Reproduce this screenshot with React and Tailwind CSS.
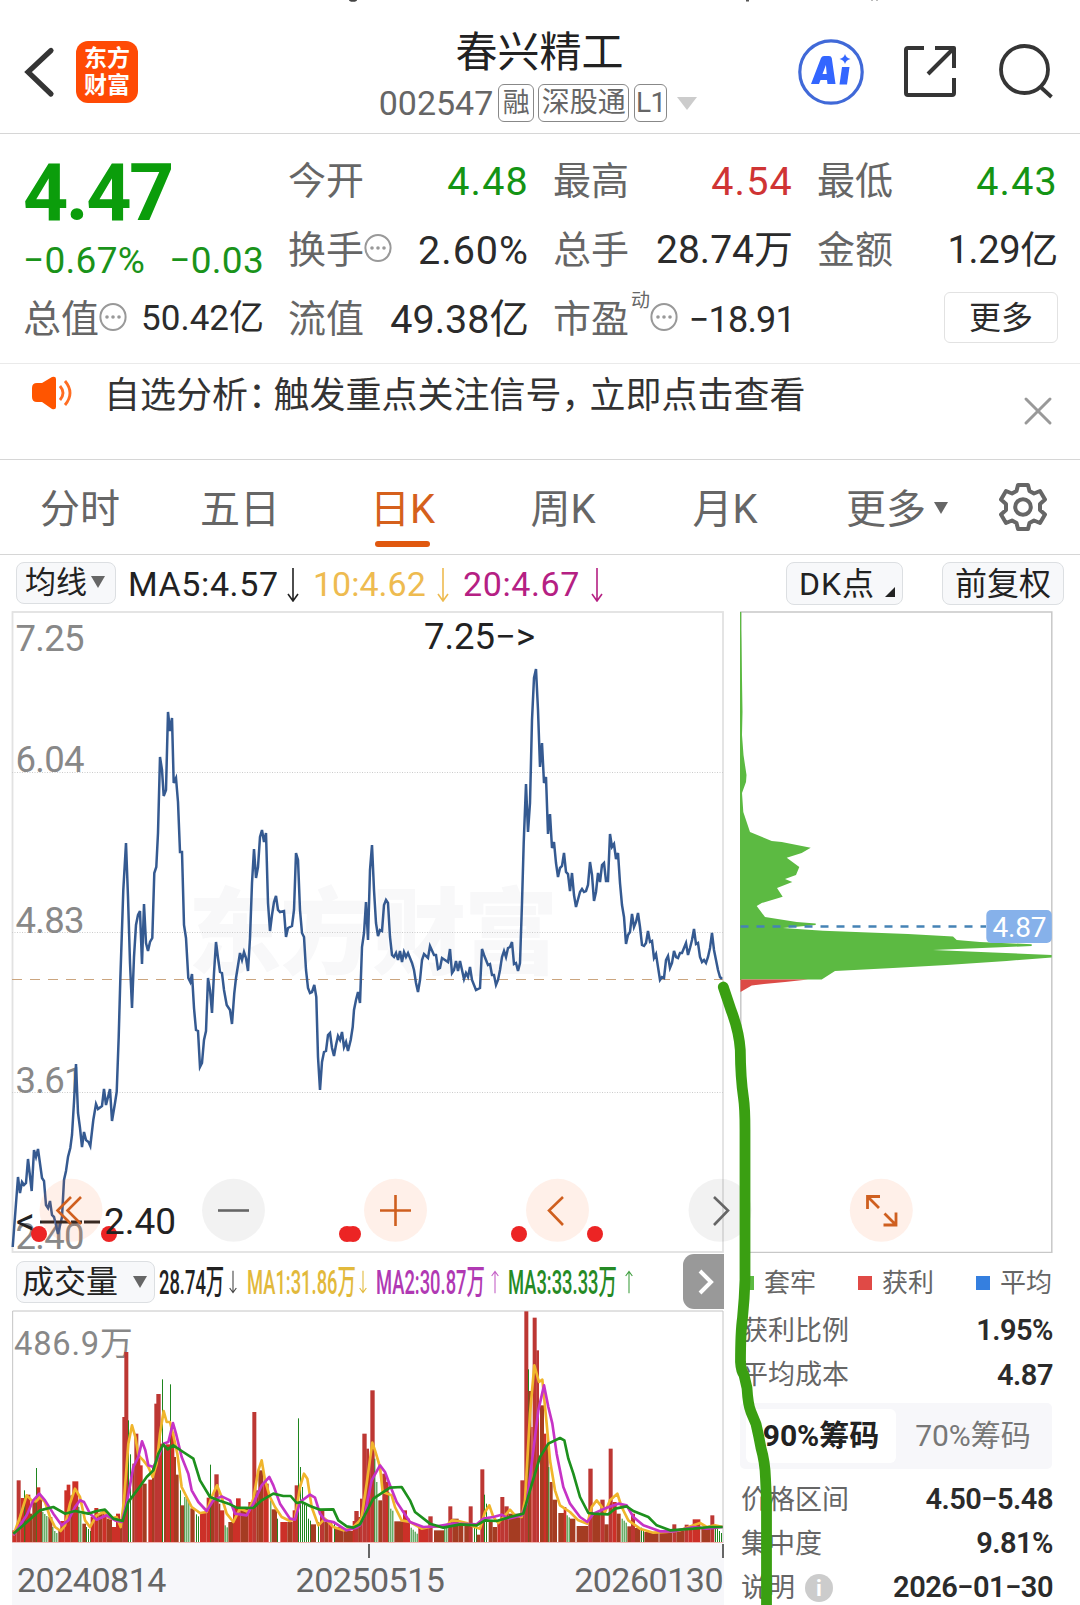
import { X } from 'lucide-react';

const PRICE_POINTS =
  '12.7,1247 18,1177 20,1193 22,1182 24,1185 26,1183 28,1159 31.7,1191 34,1150 36,1157 38,1149 42,1178 44,1181 46,1205 48,1208 50,1201 52,1215 54,1217 56,1225 58,1234 62,1217 64,1180 66,1171 68,1157 70.3,1148 72,1135 74,1102 76,1064 78,1113 80,1128 82,1147 84,1132 86,1140 88.5,1142 90.3,1146 93.3,1120 96,1104 98,1109 102,1106 104,1089 106,1105 110,1089 112,1121 115,1103 116.7,1092 118.7,1037 120.3,980 ' +
  '123.3,890 126,843 128,897 130,963 132,1008 134,957 136,925 138,915 140,911 142,964 144,904 146,943 148,951 150,942 152.3,938 154.3,873 156.3,867 158,833 160,757 162,770 163.7,796 166,790 168,712 170,731 172,718 173.7,783 176,778 178,802 180,852 182,852 184,925 186,938 188.3,978 190.3,982 192,974 194,1008 196,1030 198,1031 200,1067 202,1063 204,1040 206,1031 208,978 210,990 212,1013 214,973 216,942 218,958 220,972 222,973 224,990 226.7,1005 230,1010 232,1024 234.3,993 236,978 240,953 242,960 244,952 246,958 248,971 250,938 252,883 254,849 256,878 258,867 260,837 262,830 264,842 266,833 268,903 270,931 272,915 274,902 276,896 278,910 280,912 284,911 286,937 288,928 292,926 294,910 296,853 298,860 300,910 302,933 304,937 306,970 308,988 310,993 312,992 314.3,985 316.3,997 318,1057 320,1090 322,1062 324,1052 326,1051 328,1035 330,1033 332,1048 334,1056 336,1045 338,1036 340,1040 342,1032 344,1047 346,1042 348,1051 350.7,1040 352.7,1027 354,1010 356,1000 358,992 360,1003 362,947 ' +
  '364,933 366,902 368,940 370,870 372,845 374,890 376,923 378,936 380,930 382,931 384,905 386,900 388,903 390,937 392,955 394,957 396,953 398,960 400,951 402,962 404,952 406,957 408,953 412,963 414,970 416,983 418,992 420,980 422,960 424,954 428,958 430,946 434,955 436,955 438,969 440,968 442,958 448,962 450,949 452,973 454,970 456,961 458,971 460,961 464,979 466,973 468,977 470,967 472,980 476,990 480,988 482,949 484,955 488,965 490,964 492,975 494,975 496,985 498,980 500,970 502,957 504,951 506,957 508,948 510,947 512,942 514,964 516,963 518,971 520,963 522,903 523.7,843 526,784 528,832 530,803 532,720 534,678 536,669 538,710 540,767 542,743 544,783 546,777 548,834 550,814 552,848 554,842 556,863 558,877 560,868 562,866 564,853 566,872 568,874 570,891 572,873 574,895 576,907 580,892 582,889 584,892 586,891 588,885 590,862 592,875 594,901 596,892 598,873 600,882 602,865 604,863 606,881 608,881 610,834 612,847 614,844 616,859 618,853 620,883 622,905 624,917 626,944 628,935 630,932 632,914 634,927 636,922 638,913 640,927 642,945 644,946 646,943 648,931 650,942 652,941 654,958 656,954 658,967 660,980 662,977 664,978 666,960 668,956 670,968 672,963 674,951 676,957 678,958 680,953 682,953 684,948 686,943 688,955 690,948 692,940 694,929 696,944 698,943 700,957 702,962 704,960 706,963 708,957 710,948 712,933 714,950 716,960 718,970 720,977 722,979';

const CHIP_POINTS =
  '740.5,612 741.3,640 742,680 742.5,712 742,735 743.5,755 746.5,775 746,782 742,793 743.3,812 750,832 771.7,841 781.7,842 810.7,847.7 801.7,853 786.7,857.7 799.3,867 796,875 785,879 792.3,882 777,888 782.7,896.7 761.7,903 756.7,906 765,917 796.7,922 815.7,923.5 815.7,925 783,928 823,930.7 908,934 953,936.5 956.7,940 980,942 1031.7,944.3 1031.7,946 1006.7,947 933,950 993,952.5 1051.7,955 1051.7,957.5 1006.7,961 946.7,965 893,968 835,971 821.7,979.5 740.5,979.5';

// volume data is in thirds of a pixel: [x0, x1, top, kind]
// r = up, d = up (isolated spike), b = mixed, g = thin down bars
const VOLUME = [
  [37, 50, 690, 'r'], [50, 62, 540, 'd'], [62, 74, 593, 'r'], [72, 75, 570, 'g'], [74, 80, 605, 'b'], [78, 91, 583, 'r'],
  [90, 97, 640, 'b'], [97, 108, 600, 'b'], [108, 111, 503, 'g'], [110, 121, 561, 'r'], [120, 126, 597, 'b'], [127, 145, 635, 'g'],
  [145, 157, 650, 'b'], [157, 160, 680, 'g'], [163, 175, 692, 'g'], [175, 185, 690, 'b'], [181, 193, 662, 'r'], [193, 201, 570, 'r'],
  [200, 211, 553, 'r'], [211, 219, 585, 'b'], [217, 235, 543, 'r'], [235, 239, 620, 'g'], [241, 246, 640, 'g'], [247, 258, 670, 'b'],
  [258, 272, 680, 'g'], [272, 283, 650, 'r'], [283, 295, 623, 'r'], [295, 307, 640, 'b'], [307, 320, 632, 'r'], [320, 336, 655, 'b'],
  [336, 348, 680, 'r'], [348, 360, 640, 'r'], [360, 368, 665, 'b'], [367, 376, 350, 'd'], [373, 385, 155, 'd'], [384, 387, 360, 'g'],
  [390, 393, 462, 'g'], [397, 404, 490, 'b'], [403, 415, 400, 'd'], [412, 421, 465, 'r'], [420, 428, 495, 'r'], [428, 440, 550, 'b'],
  [445, 458, 538, 'r'], [456, 464, 500, 'b'], [463, 471, 310, 'd'], [469, 482, 281, 'd'], [480, 487, 430, 'r'], [486, 489, 237, 'g'],
  [492, 499, 440, 'b'], [498, 511, 432, 'r'], [510, 513, 252, 'g'], [512, 523, 395, 'r'], [522, 528, 470, 'b'], [527, 536, 523, 'b'],
  [540, 543, 570, 'g'], [541, 553, 615, 'b'], [553, 568, 590, 'g'], [571, 584, 624, 'b'], [588, 598, 642, 'g'], [600, 620, 638, 'r'],
  [620, 631, 592, 'r'], [630, 633, 493, 'g'], [632, 644, 600, 'b'], [643, 656, 522, 'd'], [656, 661, 610, 'b'], [660, 673, 630, 'r'],
  [674, 684, 675, 'g'], [685, 700, 665, 'b'], [699, 709, 620, 'r'], [708, 722, 594, 'r'], [722, 745, 622, 'b'], [745, 758, 605, 'r'],
  [757, 769, 335, 'd'], [769, 776, 570, 'b'], [775, 790, 510, 'b'], [790, 806, 550, 'r'], [811, 814, 600, 'g'], [815, 831, 627, 'b'],
  [831, 836, 655, 'g'], [841, 862, 665, 'r'], [862, 878, 665, 'b'], [878, 886, 630, 'r'], [884, 894, 555, 'd'], [894, 897, 354, 'g'],
  [900, 903, 500, 'g'], [906, 909, 560, 'g'], [912, 921, 610, 'g'], [924, 933, 655, 'g'], [932, 948, 672, 'b'], [954, 957, 665, 'g'],
  [960, 973, 632, 'd'], [973, 985, 665, 'b'], [985, 997, 668, 'r'], [1002, 1005, 670, 'g'], [1005, 1030, 680, 'b'], [1030, 1060, 692, 'b'],
  [1058, 1066, 662, 'r'], [1063, 1076, 632, 'd'], [1075, 1082, 650, 'b'], [1080, 1087, 595, 'd'], [1087, 1100, 400, 'd'], [1099, 1107, 445, 'd'],
  [1106, 1112, 470, 'r'], [1111, 1124, 270, 'd'], [1123, 1127, 475, 'g'], [1129, 1132, 545, 'g'], [1135, 1147, 600, 'b'], [1147, 1159, 520, 'd'],
  [1158, 1166, 545, 'r'], [1165, 1168, 575, 'g'], [1171, 1180, 625, 'g'], [1183, 1210, 663, 'b'], [1209, 1221, 630, 'r'], [1221, 1230, 655, 'r'],
  [1232, 1253, 682, 'g'], [1255, 1286, 680, 'r'], [1285, 1298, 648, 'd'], [1302, 1333, 690, 'b'], [1333, 1346, 672, 'g'], [1345, 1357, 618, 'd'],
  [1357, 1376, 655, 'b'], [1376, 1390, 670, 'b'], [1393, 1407, 670, 'b'], [1406, 1418, 618, 'd'], [1422, 1430, 670, 'g'], [1430, 1441, 703, 'b'],
  [1441, 1453, 507, 'd'], [1452, 1455, 583, 'g'], [1458, 1464, 610, 'g'], [1466, 1478, 665, 'b'], [1478, 1491, 680, 'b'], [1492, 1502, 660, 'r'],
  [1501, 1513, 590, 'd'], [1513, 1526, 618, 'd'], [1526, 1561, 640, 'b'], [1561, 1574, 540, 'd'], [1573, 1585, 33, 'd'], [1584, 1587, 207, 'g'],
  [1585, 1594, 272, 'b'], [1594, 1598, 380, 'r'], [1598, 1610, 52, 'd'], [1609, 1617, 150, 'd'], [1620, 1632, 315, 'b'], [1631, 1639, 400, 'r'],
  [1638, 1646, 440, 'b'], [1645, 1649, 500, 'g'], [1649, 1658, 545, 'b'], [1657, 1671, 598, 'b'], [1675, 1692, 638, 'b'], [1691, 1699, 620, 'r'],
  [1700, 1710, 645, 'g'], [1710, 1726, 655, 'b'], [1730, 1765, 677, 'b'], [1765, 1778, 505, 'd'], [1777, 1801, 640, 'b'], [1801, 1814, 598, 'd'],
  [1813, 1826, 672, 'b'], [1826, 1838, 445, 'd'], [1838, 1850, 605, 'r'], [1850, 1862, 640, 'b'], [1865, 1880, 655, 'g'], [1882, 1905, 678, 'b'],
  [1893, 1905, 640, 'd'], [1905, 1921, 683, 'b'], [1923, 1932, 682, 'g'], [1933, 1976, 695, 'b'], [1978, 2016, 698, 'b'], [2017, 2029, 672, 'd'],
  [2029, 2054, 690, 'b'], [2054, 2066, 673, 'd'], [2066, 2078, 685, 'r'], [2078, 2101, 657, 'r'], [2104, 2131, 685, 'b'], [2131, 2143, 645, 'd'],
  [2145, 2169, 680, 'g'],
];

const MA_LINES = [
  {
    color: '#f0b52c',
    points:
      '40,705 60,650 80,585 95,600 108,603 120,590 135,605 150,650 165,680 182,692 195,675 210,610 225,565 240,590 255,660 270,680 290,645 310,635 330,655 350,650 362,680 372,600 385,430 396,375 406,410 415,465 430,480 445,500 458,530 470,490 480,400 491,332 500,365 510,365 520,405 532,460 545,560 560,590 575,620 600,638 620,635 635,590 651,555 665,590 680,640 700,665 720,625 745,635 760,595 775,510 785,480 795,540 810,590 825,620 845,650 870,662 885,655 900,560 912,520 922,535 935,620 955,675 975,655 1000,680 1030,690 1055,685 1080,660 1085,650 1100,550 1117,427 1125,450 1140,500 1148,575 1175,585 1185,620 1205,660 1230,665 1265,685 1295,678 1335,680 1355,660 1375,662 1400,668 1425,680 1440,685 1455,635 1468,615 1480,650 1495,668 1515,645 1530,628 1545,645 1565,650 1575,600 1590,340 1603,195 1617,245 1627,238 1640,370 1650,480 1665,570 1680,615 1710,635 1735,660 1762,670 1775,620 1790,600 1802,615 1815,635 1830,600 1852,580 1865,620 1885,660 1920,685 1960,697 2000,695 2040,690 2080,675 2100,668 2120,680 2145,675 2168,680',
  },
  {
    color: '#c633c6',
    points:
      '40,705 80,645 100,600 118,580 135,600 160,640 185,675 205,660 225,620 240,600 252,605 270,640 290,658 320,645 345,660 365,665 380,610 400,500 415,470 426,423 436,450 445,495 460,500 475,470 490,430 505,425 519,368 528,400 545,470 565,520 575,570 595,605 620,632 640,600 665,588 690,600 705,640 740,645 760,610 785,555 808,530 820,555 840,610 870,655 885,658 900,605 930,583 945,592 960,640 975,660 1000,665 1040,690 1070,682 1080,675 1095,640 1115,540 1140,495 1155,515 1170,555 1190,605 1210,635 1230,665 1270,680 1310,678 1360,670 1430,672 1450,655 1480,650 1505,643 1525,655 1565,645 1580,610 1600,450 1615,330 1632,255 1645,320 1657,370 1670,460 1690,560 1710,610 1740,650 1762,665 1780,640 1820,622 1855,610 1880,615 1900,650 1930,675 1980,693 2020,693 2080,680 2120,685 2168,680',
  },
  {
    color: '#1d901d',
    points:
      '40,700 70,675 120,630 160,620 195,640 225,632 265,640 290,632 315,628 340,655 368,662 385,605 415,565 440,530 460,510 475,460 490,432 503,447 520,435 545,452 580,475 600,540 630,590 655,600 690,612 710,622 760,623 785,600 820,580 850,587 872,587 890,608 905,605 930,617 960,628 1000,627 1015,660 1040,678 1060,682 1080,672 1120,595 1170,562 1205,560 1230,600 1245,635 1290,670 1330,682 1380,672 1430,675 1455,660 1490,662 1530,650 1570,640 1590,570 1620,470 1645,430 1680,413 1693,420 1705,475 1720,520 1740,590 1765,638 1780,640 1825,642 1845,625 1880,618 1900,632 1945,650 1970,675 2010,690 2080,685 2130,680 2168,680',
  },
];

const BAR_COLORS = { r: '#cc3028', d: '#bd3733', b: '#a53c22', g: '#1f861f' };

function Caret({ className }) {
  return (
    <svg viewBox="0 0 20 16" className={className} preserveAspectRatio="none">
      <path d="M0 0h20L10 16z" fill="currentColor" />
    </svg>
  );
}

function Dots() {
  return (
    <svg viewBox="0 0 28 30" className="mb-[6px] h-[30px] w-[28px] shrink-0 text-[#999]">
      <ellipse cx="14" cy="15" rx="12.600" ry="13" fill="none" stroke="currentColor" strokeWidth="2" />
      <circle cx="8" cy="15" r="1.8" fill="currentColor" />
      <circle cx="14" cy="15" r="1.8" fill="currentColor" />
      <circle cx="20" cy="15" r="1.8" fill="currentColor" />
    </svg>
  );
}

function Header() {
  return (
    <header className="relative flex h-[134px] shrink-0 items-center border-b border-[#d6d6d6] pt-[11px]">
      <svg viewBox="0 0 1080 3" className="absolute top-0 left-0 h-[3px] w-[1080px]">
        <ellipse cx="353" cy="0" rx="4" ry="1.8" fill="#444" />
        <rect x="746" y="0" width="3" height="1.5" fill="#555" />
        <rect x="871" y="0" width="2" height="1" fill="#bbb" />
        <rect x="876" y="0" width="2" height="1" fill="#bbb" />
      </svg>
      <svg viewBox="0 0 32 56" className="ml-[23px] h-[56px] w-[32px]" fill="none" stroke="#353535" strokeWidth="5.200">
        <path d="M28 6.500 5 28 28 50" strokeLinecap="round" />
      </svg>
      <div className="ml-[21px] flex h-[62px] w-[62px] flex-col items-center justify-center rounded-[12px] bg-[#ff4a05] text-[23px] leading-[27px] font-bold text-white">
        <span>东方</span>
        <span>财富</span>
      </div>

      <div className="ml-[240px] flex w-[320px] flex-col items-center">
        <h1 className="h-[62px] pl-[3px] text-[42px] leading-[64px] text-[#222]">春兴精工</h1>
        <div className="flex h-[40px] items-center text-[#666]">
          <span className="mr-[5px] text-[34px] leading-[40px]">002547</span>
          <span className="mr-[4px] flex h-[38px] w-[36px] items-center justify-center rounded-[6px] border border-[#888] text-[27px]">融</span>
          <span className="mr-[5px] flex h-[38px] w-[91px] items-center justify-center rounded-[6px] border border-[#888] text-[28px]">深股通</span>
          <span className="flex h-[38px] w-[33px] items-center justify-center rounded-[6px] border border-[#888] text-[28px] tracking-[-0.500px]">L1</span>
          <Caret className="ml-[10px] h-[13px] w-[20px] text-[#ccc]" />
        </div>
      </div>

      <svg viewBox="0 0 68 68" className="ml-[99px] h-[68px] w-[68px]">
        <circle cx="34" cy="34" r="31.200" fill="none" stroke="#4069d8" strokeWidth="3.200" />
        <path d="M14 46 24 20q1-2 3-2h5q2.400 0 2.800 2.300L38.500 46h-8l-.5-4h-6.500L22 46zM25.500 36h4.200l-.8-9z" fill="#3366ff" fillRule="evenodd" />
        <path d="M45 29h7.500L50 46.500h-7.500z" fill="#3366ff" />
        <path d="M48 16q1 4 5.500 5-4.500 1-5.500 5-1-4-5.500-5 4.500-1 5.500-5z" fill="#3366ff" />
      </svg>
      <svg viewBox="0 0 56 56" className="ml-[37px] h-[56px] w-[56px]" fill="none" stroke="#353535" strokeWidth="4" strokeLinejoin="round">
        <path d="M22 4H6q-2 0-2 2v43q0 2 2 2h44q2 0 2-2V34" />
        <path d="M33 4h19v20M52 4 26 30" />
      </svg>
      <svg viewBox="0 0 60 60" className="ml-[39px] h-[60px] w-[60px]" fill="none" stroke="#353535" strokeWidth="3.800">
        <circle cx="27.500" cy="27.500" r="23.500" />
        <path d="M43 44.500 54.500 55" />
      </svg>
    </header>
  );
}

function Cell({ label, value, dots, valueClass = 'text-[39px] text-[#2b2b2b]' }) {
  return (
    <div className="flex h-[69px] items-center justify-between whitespace-nowrap">
      <span className="flex items-center text-[38px] text-[#666]">
        {label}
        {dots && <Dots />}
      </span>
      <span className={valueClass}>{value}</span>
    </div>
  );
}

function Quote() {
  return (
    <section className="flex h-[230px] shrink-0 border-b border-[#eaeaea] pt-[13px] pl-[23px]">
      <div className="grid grid-cols-[241px_241px_240px_241px] content-start gap-x-[24px]">
        <div className="row-span-2 flex flex-col text-[#0b9d0b]">
          <div className="h-[89px] pt-[2px] text-[79px] leading-[89px] font-bold tracking-[-2.500px]">4.47</div>
          <div className="flex justify-between pt-[5px] text-[37px] leading-[40px] text-[#1a931a]">
            <span className="tracking-[0.300px]">−0.67%</span>
            <span className="tracking-[0.300px]">−0.03</span>
          </div>
        </div>
        <Cell label="今开" value="4.48" valueClass="text-[39.500px] tracking-[1.200px] text-[#149414]" />
        <Cell label="最高" value="4.54" valueClass="text-[39.500px] tracking-[1.200px] text-[#cf3434]" />
        <Cell label="最低" value="4.43" valueClass="text-[39.500px] tracking-[1.200px] text-[#149414]" />
        <Cell label="换手" value="2.60%" dots valueClass="text-[39.500px] tracking-[1px] text-[#2b2b2b]" />
        <Cell label="总手" value="28.74万" />
        <Cell label="金额" value="1.29亿" valueClass="text-[38px] tracking-[-0.300px] text-[#2b2b2b]" />
        <Cell label="总值" value="50.42亿" dots valueClass="text-[35px] text-[#2b2b2b]" />
        <Cell label="流值" value="49.38亿" valueClass="text-[39.500px] text-[#2b2b2b]" />
        <Cell
          label={
            <>
              市盈<sup className="top-[-19px] ml-[2px] text-[19px] leading-none">动</sup>
            </>
          }
          value="−18.91"
          dots
          valueClass="-mr-[2px] text-[36px] tracking-[-0.800px] text-[#2b2b2b]"
        />
        <div className="flex h-[69px] items-center justify-end pb-[4px]">
          <button className="flex h-[51px] w-[114px] items-center justify-center rounded-[6px] border border-[#e2e2e2] text-[32px] text-[#2b2b2b]">
            更多
          </button>
        </div>
      </div>
    </section>
  );
}

function Notice() {
  return (
    <section className="flex h-[96px] shrink-0 items-start border-b border-[#d6d6d6] pl-[31px] text-[#333]">
      <svg viewBox="0 0 42 34" className="mt-[12px] h-[34px] w-[42px]">
        <path d="M1 12q0-5 5-5h5L21 1q4-1 4 2v28q0 3-4 2l-10-7H6q-5 0-5-5z" fill="#ff5500" />
        <path d="M29 10q6 7 0 14M34 5q10 12 0 24" fill="none" stroke="#ff6d22" strokeWidth="2.800" />
      </svg>
      <p className="mt-[5px] ml-[31px] w-[698px] text-[36px] leading-[55px] whitespace-nowrap">
        自选分析<span className="tracking-[-10.500px]">：</span>触发重点关注信号<span className="tracking-[-8px]">，</span>立即点击查看
      </p>
      <X className="mt-[23px] ml-[212px] h-[48px] w-[48px] text-[#999]" strokeWidth={1.5} />
    </section>
  );
}

function Tabs() {
  return (
    <nav className="flex h-[95px] shrink-0 items-center border-b border-[#d6d6d6] pt-[6px] text-[40px] text-[#666]">
      <span className="w-[160px] text-center">分时</span>
      <span className="w-[160px] text-center">五日</span>
      <span className="relative w-[165px] text-center text-[#d5601c]">
        日K
        <i className="absolute bottom-[-7px] left-[55px] h-[6px] w-[55px] rounded-full bg-[#e0580f]" />
      </span>
      <span className="w-[156px] text-center">周K</span>
      <span className="w-[168px] text-center">月K</span>
      <span className="ml-[37px] flex items-center">
        更多
        <Caret className="mb-[5px] ml-[8px] h-[12px] w-[14px]" />
      </span>
      <svg viewBox="-25 -25 50 50" className="mb-[7px] ml-[50px] h-[50px] w-[50px]" fill="none" stroke="#666" strokeWidth="4" strokeLinejoin="round">
        <path d="M-5-22H5L6.500-16 11-13.500 17-16 22-7.500 17-3V3L22 7.500 17 16 11 13.500 6.500 16 5 22H-5L-6.500 16-11 13.500-17 16-22 7.500-17 3V-3L-22-7.500-17-16-11-13.500-6.500-16z" />
        <circle r="7.800" />
      </svg>
    </nav>
  );
}

function Arrow({ up, className }) {
  return (
    <svg viewBox="0 0 12 34" className={className} fill="none" stroke="currentColor" strokeWidth="1.600">
      {up ? <path d="M6 34V2M1 8 6 1l5 7" /> : <path d="M6 0v32M1 26l5 7 5-7" />}
    </svg>
  );
}

const chip = 'flex items-center rounded-[8px] border border-[#dcdfe2] bg-[#f7f8fa] text-[#222]';

function IndicatorBar() {
  return (
    <div className="flex h-[56px] shrink-0 items-start pt-[7px] pl-[16px] text-[34px] leading-[44px] text-[#222]">
      <span className={`${chip} h-[42px] w-[100px] pl-[8px] text-[31px]`}>
        均线
        <Caret className="mb-[2px] ml-[4px] h-[12px] w-[14px] text-[#666]" />
      </span>
      <span className="ml-[12px] w-[159px] tracking-[0.600px]">MA5:4.57</span>
      <Arrow className="mt-[6px] h-[34px] w-[12px]" />
      <span className="ml-[14px] w-[124px] text-[#eebb50]">10:4.62</span>
      <Arrow className="mt-[6px] h-[34px] w-[12px] text-[#eebb50]" />
      <span className="ml-[14px] w-[128px] tracking-[0.600px] text-[#b52083]">20:4.67</span>
      <Arrow className="mt-[6px] h-[34px] w-[12px] text-[#b52083]" />
      <span className={`${chip} ml-[183px] h-[43px] w-[117px] pl-[12px] text-[32px]`}>
        <span className="tracking-[1px]">DK点</span>
        <svg viewBox="0 0 10 10" className="mt-[16px] ml-[10px] h-[10px] w-[10px]">
          <path d="M10 0v10H0z" fill="#222" />
        </svg>
      </span>
      <span className={`${chip} ml-[39px] h-[43px] w-[122px] justify-center text-[32px]`}>前复权</span>
    </div>
  );
}

const AXIS = [
  ['7.25', 651],
  ['6.04', 772],
  ['4.83', 933],
  ['3.61', 1093],
  ['2.40', 1249],
];

function PriceChart() {
  return (
    <svg viewBox="12 611 729 642" className="h-[642px] w-[729px] shrink-0 overflow-visible">
      <text x="188" y="967" fontSize="94" fontWeight="900" fill="#f8f8f9" textLength="370">东方财富</text>
      <rect x="12.500" y="612" width="710.500" height="640" fill="none" stroke="#e2e2e2" strokeWidth="1.800" />
      {[772.5, 932.5, 1092.5].map((y) => (
        <path key={y} d={`M12 ${y}H723`} stroke="#ccc" strokeDasharray="1 1.500" />
      ))}
      <path d="M12 979.500H723" stroke="#cba57f" strokeWidth="1.200" strokeDasharray="10 8" />
      {AXIS.map(([label, y]) => (
        <text key={label} x="15.500" y={y} fontSize="36.500" fill="#888" textLength="69">{label}</text>
      ))}
      <polyline points={PRICE_POINTS} fill="none" stroke="#355a91" strokeWidth="2.500" />
      <text x="424" y="649" fontSize="36.500" fill="#222" textLength="111">7.25−&gt;</text>
      {[39, 109, 347, 353, 519, 595].map((x) => (
        <circle key={x} cx={x} cy="1234" r="8" fill="#ec2424" />
      ))}
      <text x="16" y="1234" fontSize="37" fill="#222">&lt;</text>
      <path d="M40 1222h14M56 1222h13M71 1222h11M84 1222h16" stroke="#222" strokeWidth="3" />
      <text x="104" y="1234" fontSize="37" fill="#222" textLength="72">2.40</text>
      <g fill="#fb6a2b" fillOpacity="0.1">
        <circle cx="71" cy="1210.300" r="31.500" />
        <circle cx="395.500" cy="1210.300" r="31.500" />
        <circle cx="557.500" cy="1210.300" r="31.500" />
      </g>
      <g fill="#000" fillOpacity="0.05">
        <circle cx="233.500" cy="1210.300" r="31.500" />
        <circle cx="720" cy="1210.300" r="31.500" />
      </g>
      <g fill="none" stroke="#cf5f1f" strokeWidth="2.600">
        <path d="M71 1197 57.500 1210.500 71 1224M81 1197 67.500 1210.500 81 1224" />
        <path d="M380 1210.500h31M395.500 1195v31" />
        <path d="M563 1197 549 1210.500 563 1225" />
      </g>
      <g fill="none" stroke="#666" strokeWidth="2.600">
        <path d="M218 1210.500h31" />
        <path d="M714 1197 728 1210.500 714 1225" />
      </g>
    </svg>
  );
}

function Squeezed({ className, children }) {
  return (
    <span className={className}>
      <span className="inline-block origin-left scale-x-[0.54] font-medium">{children}</span>
    </span>
  );
}

function VolumeBar() {
  return (
    <div className="flex h-[57px] w-[712px] items-center pl-[4px] text-[34px] leading-[40px] whitespace-nowrap">
      <span className={`${chip} h-[42px] w-[139px] shrink-0 pl-[5px] text-[32px]`}>
        成交量
        <Caret className="ml-[15px] h-[12px] w-[14px] text-[#666]" />
      </span>
      <Squeezed className="ml-[4px] w-[70px] shrink-0 text-[#222]">28.74万</Squeezed>
      <Arrow className="h-[36px] w-[8px] shrink-0 text-[#444]" />
      <Squeezed className="ml-[10px] w-[112px] shrink-0 text-[#e2b93b]">MA1:31.86万</Squeezed>
      <Arrow className="h-[36px] w-[8px] shrink-0 text-[#e2b93b]" />
      <Squeezed className="ml-[9px] w-[115px] shrink-0 text-[#b039b3]">MA2:30.87万</Squeezed>
      <Arrow up className="h-[36px] w-[8px] shrink-0 text-[#c45fc6]" />
      <Squeezed className="ml-[9px] w-[117px] shrink-0 text-[#258a25]">MA3:33.33万</Squeezed>
      <Arrow up className="h-[36px] w-[8px] shrink-0 text-[#3f9f3f]" />
      <span className="ml-auto flex h-[55px] w-[41px] shrink-0 items-center justify-center rounded-l-[11px] bg-[#999]">
        <svg viewBox="0 0 16 26" className="ml-[4px] h-[26px] w-[16px]" fill="none" stroke="#fff" strokeWidth="4">
          <path d="M2 2 13 13 2 24" />
        </svg>
      </span>
    </div>
  );
}

function VolumeChart() {
  return (
    <>
      <svg viewBox="36 29 2136 699" className="h-[233px] w-[712px] shrink-0">
        <path d="M38 728V32H2169V728" fill="none" stroke="#c4c4c4" strokeWidth="3" />
        <path d="M38 727H2169" stroke="#f0a9a5" strokeWidth="3" />
        <text x="42" y="164" fontSize="98" fill="#888" textLength="356">486.9万</text>
        {VOLUME.map(([x0, x1, top, kind]) => {
          if (kind !== 'g') {
            return <rect key={`${x0}-${top}`} x={x0} y={top} width={x1 - x0} height={725 - top} fill={BAR_COLORS[kind]} />;
          }
          const bars = [];
          for (let x = x0; x < x1; x += 6) bars.push(x);
          return bars.map((x, i) => (
            <rect key={`${x}-g`} x={x} y={top + i * 6} width="3" height={725 - top - i * 6} fill={BAR_COLORS.g} />
          ));
        })}
        {MA_LINES.map((line) => (
          <polyline key={line.color} points={line.points} fill="none" stroke={line.color} strokeWidth="8" strokeLinejoin="round" />
        ))}
      </svg>
      <div className="flex h-[62px] w-[712px] flex-col bg-[#f7f7fa] text-[34px] text-[#666]">
        <div className="flex h-[15px] justify-end pt-px">
          <i className="mr-[352px] h-[14px] w-[2px] bg-[#666]" />
          <i className="h-[14px] w-[2px] bg-[#666]" />
        </div>
        <div className="flex justify-between pr-px pl-[5px] leading-[44px] tracking-[-0.500px]">
          <span>20240814</span>
          <span>20250515</span>
          <span>20260130</span>
        </div>
      </div>
    </>
  );
}

function ChipChart() {
  return (
    <svg viewBox="740 611 313 642" className="h-[642px] w-[313px] shrink-0">
      <rect x="740.800" y="612" width="311" height="640.500" fill="none" stroke="#c8c8c8" strokeWidth="1.500" />
      <polygon points={CHIP_POINTS} fill="#5cba42" />
      <path d="M740.500 612V980" stroke="#5cba42" strokeWidth="1.500" />
      <path d="M740.500 979.500H808L785 982 764 984 751.700 985.500 740.500 992z" fill="#dc4b46" />
      <path d="M740.500 926.500H986" stroke="#4583b5" strokeWidth="2.700" strokeDasharray="8 8" />
      <rect x="986.300" y="910" width="65.500" height="33" rx="5" fill="#86b1ea" />
      <text x="992.500" y="937" fontSize="28" fill="#fff" textLength="54">4.87</text>
      <circle cx="881.300" cy="1210.300" r="31.500" fill="#fff0e9" />
      <path d="M867.500 1209V1196.500H880M867.500 1196.500 879 1208M883.500 1225H896V1212.500M896 1225 884.500 1213.500" fill="none" stroke="#cf5f1f" strokeWidth="2.800" />
    </svg>
  );
}

function StatRow({ label, value, className }) {
  return (
    <div className={`flex items-center justify-between pl-px text-[27px] text-[#666] ${className}`}>
      <span className="flex items-center">{label}</span>
      <span className="text-[29px] font-semibold tracking-[-0.500px] text-[#2b2b2b]">{value}</span>
    </div>
  );
}

function ChipPanel() {
  return (
    <div className="flex w-[313px] flex-col pt-[4px]">
      <div className="flex h-[52px] items-center justify-between pr-px text-[26px] text-[#666]">
        <span className="flex items-center gap-[10px]"><i className="h-[14px] w-[14px] bg-[#5cba42]" />套牢</span>
        <span className="flex items-center gap-[10px]"><i className="h-[14px] w-[14px] bg-[#e04a46]" />获利</span>
        <span className="flex items-center gap-[10px]"><i className="h-[14px] w-[14px] bg-[#357fdf]" />平均</span>
      </div>
      <StatRow label="获利比例" value="1.95%" className="h-[44px]" />
      <StatRow label="平均成本" value="4.87" className="h-[45px]" />
      <div className="mt-[5px] flex h-[66px] w-[312px] shrink-0 items-center rounded-[5px] bg-[#f7f7fa] px-[6px] text-[30px] leading-[44px] text-[#777]">
        <span className="flex h-[54px] w-[150px] items-center justify-center rounded-[6px] bg-white font-bold text-[#222]">90%筹码</span>
        <span className="flex-1 pl-[4px] text-center">70%筹码</span>
      </div>
      <StatRow label="价格区间" value="4.50−5.48" className="mt-[9px] h-[44px]" />
      <StatRow label="集中度" value="9.81%" className="h-[44px]" />
      <StatRow
        label={
          <>
            说明
            <i className="ml-[10px] flex h-[28px] w-[28px] items-center justify-center rounded-full bg-[#ccc] text-[22px] font-bold text-white not-italic">i</i>
          </>
        }
        value="2026−01−30"
        className="h-[44px]"
      />
    </div>
  );
}

// freehand marker stroke over the charts
function Marker() {
  return (
    <svg viewBox="0 0 1080 1605" className="pointer-events-none absolute top-0 left-0 h-[1605px] w-[1080px]">
      <path
        d="M723.300 987 731 1010Q739 1031 740.300 1050 740.500 1078 743.500 1098 745 1108 745 1130V1280Q744.500 1298 742.500 1318 740.500 1332 740.500 1362 741 1371 744 1375L747 1388Q748 1405 751 1412L756 1424Q759 1437 761 1448 765 1462 765.500 1478L766.500 1500V1610"
        fill="none"
        stroke="#3a9f12"
        strokeWidth="10.800"
        strokeLinecap="round"
        strokeLinejoin="round"
      />
    </svg>
  );
}

export default function App() {
  return (
    <main className="relative flex h-[1605px] w-[1080px] flex-col overflow-hidden bg-white font-['Roboto','Noto_Sans_CJK_SC',sans-serif]">
      <Header />
      <Quote />
      <Notice />
      <Tabs />
      <IndicatorBar />
      <div className="flex pl-[12px]">
        <div className="flex w-[728px] flex-col">
          <PriceChart />
          <VolumeBar />
          <VolumeChart />
        </div>
        <div className="flex w-[313px] flex-col">
          <ChipChart />
          <ChipPanel />
        </div>
      </div>
      <Marker />
    </main>
  );
}
